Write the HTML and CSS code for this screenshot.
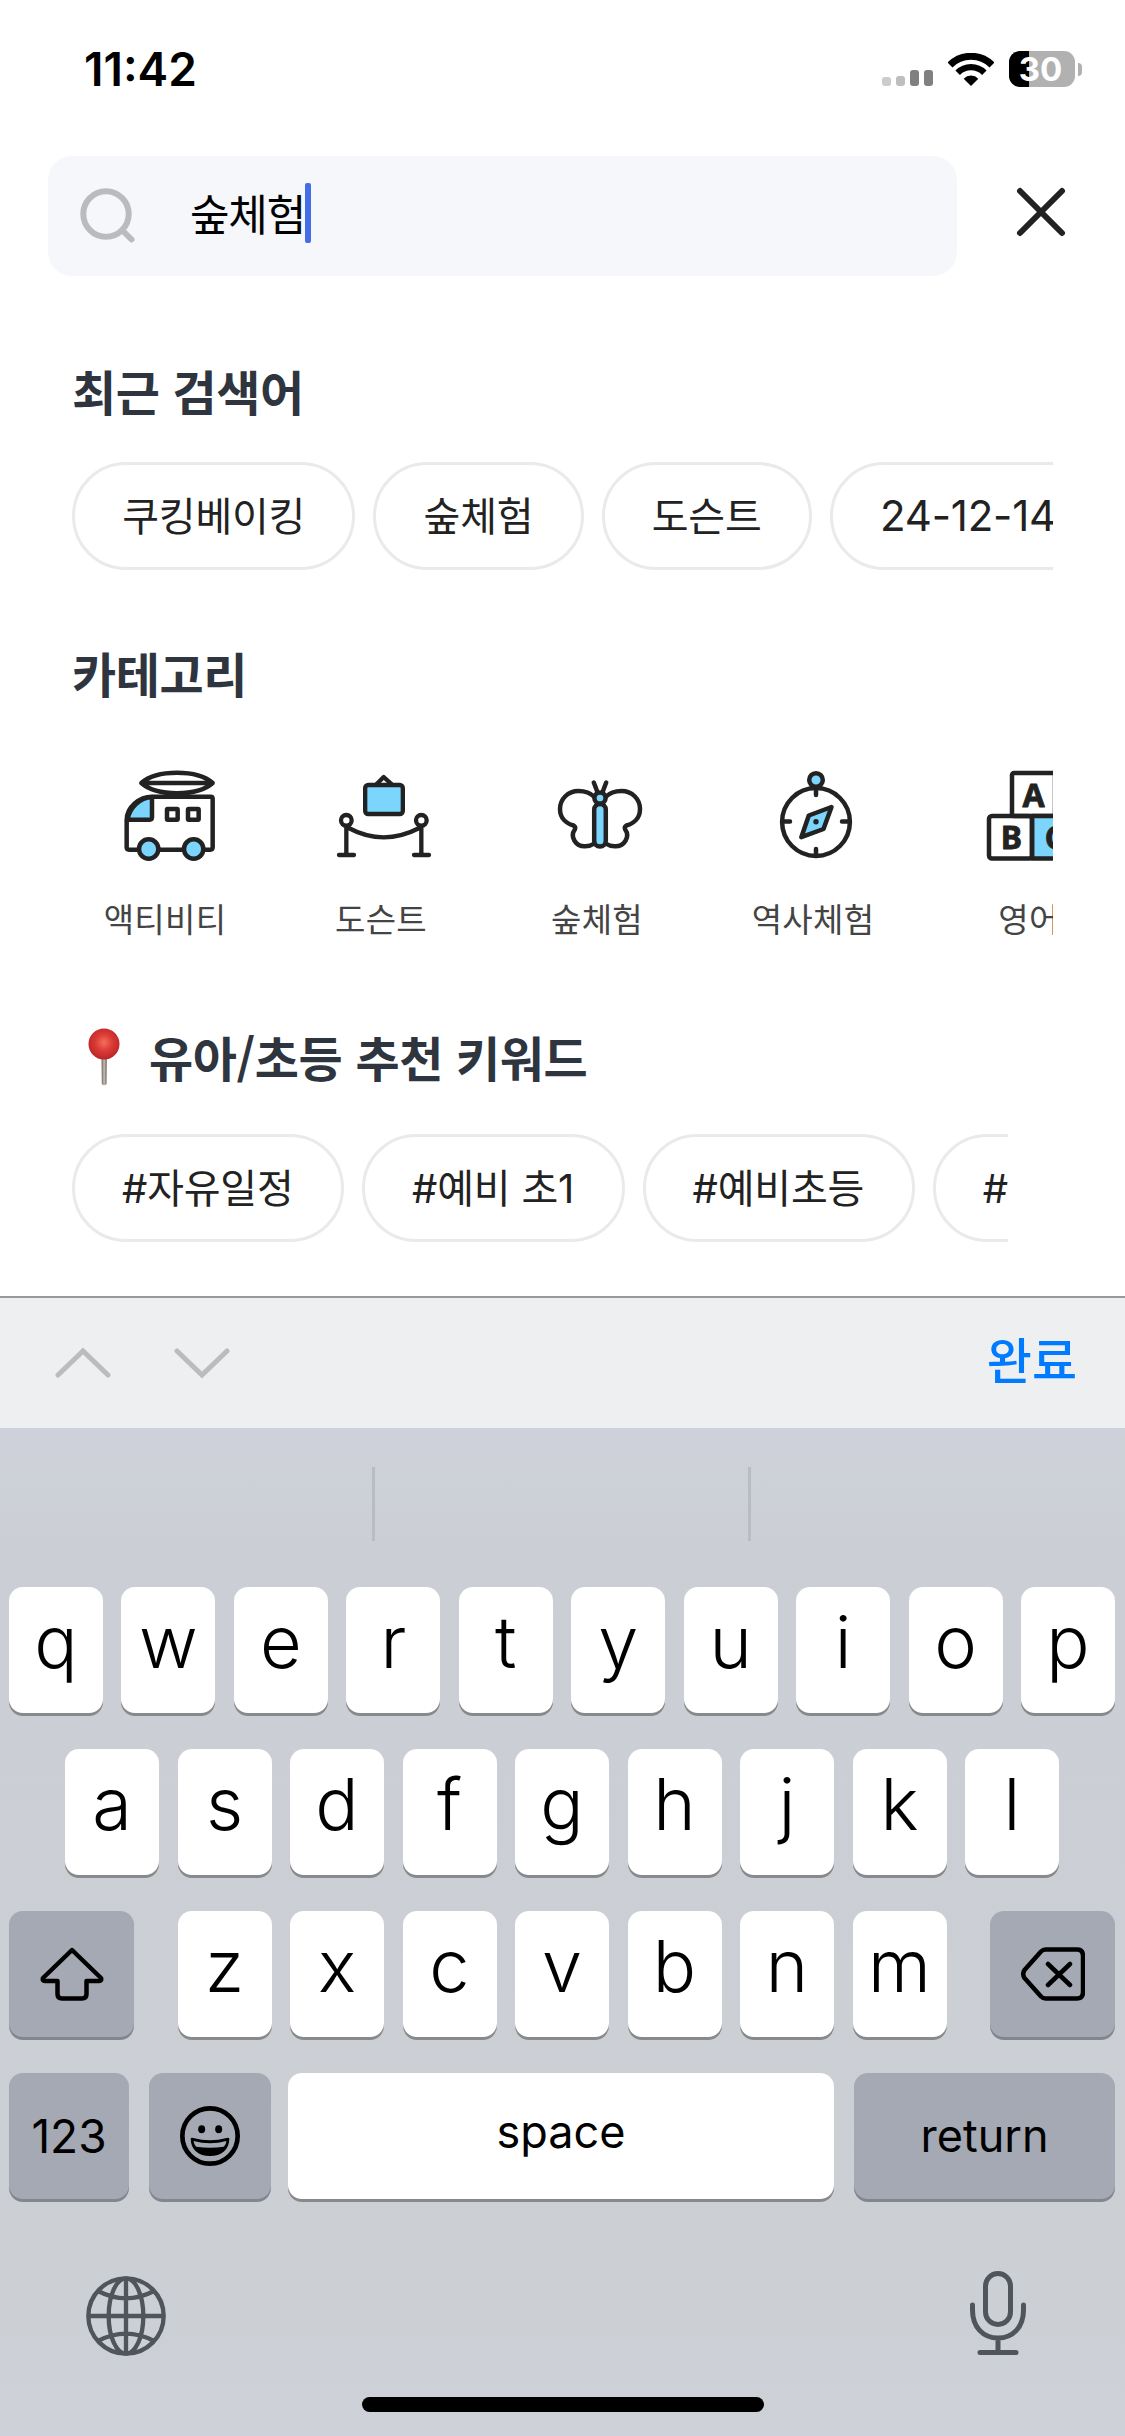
FILE: index.html
```html
<!DOCTYPE html>
<html lang="ko">
<head>
<meta charset="utf-8">
<title>검색</title>
<link rel="stylesheet" href="styles.css">
</head>
<body>
<div class="screen">
  <div class="status">
    <span class="time">11:42</span>
    <div class="indicators">
      <div class="signal"><i class="bar bar-1"></i><i class="bar bar-2"></i><i class="bar bar-3"></i><i class="bar bar-4"></i></div>
      <svg class="wifi" viewBox="264 66 138 99"><g fill="none" stroke="#000"><path stroke-width="21" d="M270 102A89 89 0 0 1 396 102"/><path stroke-width="19" d="M293 125A56 56 0 0 1 373 125"/></g><path d="M333 165L311 143A31 31 0 0 1 355 143Z"/></svg>
      <div class="battery"><span class="level">30</span><i class="nub"></i></div>
    </div>
  </div>

  <header class="search">
    <div class="field">
      <svg class="magnifier" viewBox="0 0 56 56" fill="none" stroke="#b9bbbf" stroke-width="6" stroke-linecap="round"><circle cx="26" cy="26" r="22.7"/><path d="M43 43L51.500 51.500"/></svg>
      <span class="query">숲체험</span><i class="caret"></i>
    </div>
    <svg class="close" viewBox="0 0 54 54" fill="none" stroke="#222" stroke-width="6" stroke-linecap="round"><path d="M6 6L48 48M48 6L6 48"/></svg>
  </header>

  <main class="content">
    <h2 class="title">최근 검색어</h2>
    <div class="chips">
      <span class="chip">쿠킹베이킹</span><span class="chip">숲체험</span><span class="chip">도슨트</span><span class="chip latin">24-12-14</span>
    </div>

    <h2 class="title title-category">카테고리</h2>
    <div class="categories">
      <div class="category">
        <svg class="icon" viewBox="162 66 324 324" fill="none" stroke="#222" stroke-width="13.500" stroke-linejoin="round"><path d="M244 129C290 88 412 88 458 129C412 170 290 170 244 129ZM248 129H454"/><path d="M200 322V240C200 202 236 170 278 170H452Q458 170 458 176V322Q458 329 451 329H207Q200 329 200 322Z"/><path fill="#7bd5fd" d="M203 239C207 205 240 172 276 171V232Q276 239 269 239Z"/><rect x="321" y="207" width="32" height="32" rx="2"/><rect x="384" y="207" width="32" height="32" rx="2"/><circle cx="266" cy="327" r="29" fill="#7bd5fd"/><circle cx="401" cy="327" r="29" fill="#7bd5fd"/></svg>
        <span class="label">액티비티</span>
      </div>
      <div class="category">
        <svg class="icon" viewBox="810 66 324 324" fill="none" stroke="#222" stroke-width="13" stroke-linecap="round" stroke-linejoin="round"><path d="M948 134L971 111L996 134"/><rect x="915.500" y="135" width="113" height="87" rx="9" fill="#7bd5fd"/><circle cx="859" cy="241" r="16"/><circle cx="1084" cy="241" r="16"/><path d="M859 259V344M1084 259V344M837 345H882M1062 345H1107M866 264Q970 320 1078 264"/></svg>
        <span class="label">도슨트</span>
      </div>
      <div class="category">
        <svg class="icon" viewBox="0 0 108 108" fill="none" stroke="#222" stroke-width="4.500" stroke-linecap="round" stroke-linejoin="round"><path d="M48.500 35C44 30.500 38 29 32.500 29C22 29 14 37 14 47C14 56 20 61.500 27.500 63.500Q30 65 28.800 67.500C23.500 75 30 84.300 38.500 84.300Q44 84.500 48.500 81.500M59.500 35C64 30.500 70 29 75.500 29C86 29 94 37 94 47C94 56 88 61.500 80.500 63.500Q78 65 79.200 67.500C84.500 75 78 84.300 69.500 84.300Q64 84.500 59.500 81.500M47.800 20.500L51 29M60.200 20.500L57 29"/><rect x="48.200" y="42" width="11.600" height="42.500" rx="5.800" fill="#7bd5fd"/><circle cx="54" cy="36" r="5.600" fill="#7bd5fd"/></svg>
        <span class="label">숲체험</span>
      </div>
      <div class="category">
        <svg class="icon" viewBox="0 0 108 108" fill="none" stroke="#222" stroke-width="4.500" stroke-linecap="round" stroke-linejoin="round"><circle cx="54" cy="60" r="33.900"/><circle cx="54" cy="18" r="6.800" fill="#7bd5fd"/><path d="M54 27V33M54 87V93M21 59.500H28M80 59.500H87"/><path fill="#7bd5fd" d="M69.500 45L46.800 53.500L39.300 75.200L61.500 67Z"/><circle cx="54" cy="59.800" r="2.700" fill="#222" stroke="none"/></svg>
        <span class="label">역사체험</span>
      </div>
      <div class="category">
        <svg class="icon" viewBox="0 0 108 108" fill="none" stroke="#222" stroke-width="4.500" stroke-linejoin="round"><rect x="34" y="11" width="43" height="43" rx="2"/><path fill="#7bd5fd" d="M54 54H95Q97 54 97 56V94Q97 96.500 95 96.500H54Z"/><rect x="11" y="54" width="43" height="42.500" rx="3"/><g class="block-letter" fill="#222" stroke-width=".8" text-anchor="middle"><text x="55.500" y="44.500">A</text><text x="33.300" y="87.300">B</text><text x="77" y="87.300">C</text></g></svg>
        <span class="label">영어</span>
      </div>
    </div>

    <h2 class="title title-keyword">
      <svg class="pin" viewBox="0 0 32 58"><defs><radialGradient id="pin-head" cx=".5" cy=".45" r=".6"><stop offset="0" stop-color="#f2705c"/><stop offset=".45" stop-color="#dd3a36"/><stop offset="1" stop-color="#b32226"/></radialGradient><linearGradient id="pin-stem"><stop offset="0" stop-color="#6b5f57"/><stop offset=".5" stop-color="#c9c0b8"/><stop offset="1" stop-color="#665a51"/></linearGradient></defs><path fill="url(#pin-stem)" d="M13.500 28H18.800L18.500 56Q16 58.500 13.800 56Z"/><circle cx="16" cy="16" r="15.500" fill="url(#pin-head)"/></svg>
      <span>유아/초등 추천 키워드</span>
    </h2>
    <div class="chips chips-keyword">
      <span class="chip"><b class="num">#</b>자유일정</span><span class="chip"><b class="num">#</b>예비 초<b class="num">1</b></span><span class="chip"><b class="num">#</b>예비초등</span><span class="chip"><b class="num">#</b>초등</span>
    </div>
  </main>

  <div class="toolbar">
    <div class="arrows">
      <svg class="chevron" viewBox="0 0 56 32"><path d="M3 28L28 4L53 28"/></svg>
      <svg class="chevron" viewBox="0 0 56 32"><path d="M3 4L28 28L53 4"/></svg>
    </div>
    <span class="done">완료</span>
  </div>

  <div class="keyboard">
    <div class="suggestions"><i></i><i></i><i></i></div>
    <div class="keys">
      <div class="row"><span class="key">q</span><span class="key">w</span><span class="key">e</span><span class="key">r</span><span class="key">t</span><span class="key">y</span><span class="key">u</span><span class="key">i</span><span class="key">o</span><span class="key">p</span></div>
      <div class="row"><span class="key">a</span><span class="key">s</span><span class="key">d</span><span class="key">f</span><span class="key">g</span><span class="key">h</span><span class="key">j</span><span class="key">k</span><span class="key">l</span></div>
      <div class="row row-spread">
        <span class="key key-dark key-side"><svg class="key-icon" viewBox="0 0 64 54"><path d="M32 3L61 31Q62 34 59 34H46.500V47Q46.500 51.500 42 51.500H22Q17.500 51.500 17.500 47V34H5Q2 34 3 31Z"/></svg></span>
        <div class="row"><span class="key">z</span><span class="key">x</span><span class="key">c</span><span class="key">v</span><span class="key">b</span><span class="key">n</span><span class="key">m</span></div>
        <span class="key key-dark key-side"><svg class="key-icon" viewBox="0 0 64 54"><path d="M24.500 2.500H56Q62 2.500 62 9V45Q62 51.500 56 51.500H24.500Q22 51.500 20 49.500L3.500 31Q1 27 3.500 23L20 4.500Q22 2.500 24.500 2.500ZM27 17L49 38M49 17L27 38"/></svg></span>
      </div>
      <div class="row row-bottom">
        <span class="key key-dark key-num">123</span>
        <span class="key key-dark key-emoji"><svg class="smile" viewBox="358 138 180 180"><circle cx="448" cy="228" r="83" fill="none" stroke="#000" stroke-width="14"/><ellipse cx="423" cy="208" rx="10.500" ry="12"/><ellipse cx="474" cy="208" rx="10.500" ry="12"/><path fill-rule="evenodd" d="M390 236Q391 231 398 234Q448 248 498 234Q505 231 506 236C506 268 482 288 448 288C414 288 390 268 390 236ZM399 243C400 252 403 257 407 260Q448 266 489 260C493 257 496 252 497 243Q448 257 399 243Z"/></svg></span>
        <span class="key key-space">space</span>
        <span class="key key-dark key-return">return</span>
      </div>
    </div>
    <div class="dock">
      <svg class="globe" viewBox="78 648 240 240"><circle cx="198" cy="768" r="113"/><ellipse cx="198" cy="768" rx="52" ry="113"/><path d="M198 655V881M85 768H311M114 693Q198 737 282 693M114 843Q198 799 282 843"/></svg>
      <svg class="mic" viewBox="0 0 56 84"><rect x="15.500" y="2.500" width="25" height="51" rx="12.500"/><path d="M2.500 34V39C2.500 56 13 67 28 67S53.500 56 53.500 39V34M28 67V81M10 81.500H46"/></svg>
    </div>
    <div class="home"></div>
  </div>
</div>
</body>
</html>
```
FILE: styles.css
```css
* { box-sizing: border-box; }
body {
  margin: 0;
  background: #fff;
  font-family: "Noto Sans CJK KR", sans-serif;
  color: #222;
}
svg { display: block; flex: none; }
.screen {
  width: 1125px;
  height: 2436px;
  display: flex;
  flex-direction: column;
  overflow: hidden;
}

/* status bar */
.status {
  height: 138px;
  padding: 0 43px 0 84px;
  display: flex;
  justify-content: space-between;
  align-items: center;
}
.time { font: 600 46px/60px Inter, sans-serif; color: #000; }
.indicators { display: flex; align-items: center; height: 36px; }
.signal { display: flex; align-items: flex-end; gap: 5px; height: 33px; margin-right: 15px; }
.bar { width: 9px; border-radius: 3px; background: #808080; }
.bar-1 { height: 9px; background: #ccc; }
.bar-2 { height: 10px; background: #bebebe; }
.bar-3, .bar-4 { height: 16px; }
.wifi { width: 46px; height: 33px; margin-right: 15px; }
.battery { display: flex; align-items: center; gap: 3px; }
.level {
  width: 66px;
  height: 36px;
  border-radius: 11px;
  background: linear-gradient(90deg, #000 20px, #b1b1b1 20px);
  color: #fff;
  font: 700 33px/36px Inter, sans-serif;
  text-align: center;
  padding-right: 3px;
}
.nub { width: 4px; height: 13px; border-radius: 0 4px 4px 0; background: #b1b1b1; }

/* search header */
.search {
  margin-top: 18px;
  padding: 0 57px 0 48px;
  height: 120px;
  display: flex;
  align-items: center;
  justify-content: space-between;
}
.field {
  width: 909px;
  height: 120px;
  border-radius: 24px;
  background: #f5f7fb;
  display: flex;
  align-items: center;
  padding-left: 32px;
}
.magnifier { width: 56px; height: 56px; margin-right: 54px; }
.query { font-size: 43px; line-height: 60px; letter-spacing: -1.200px; color: #000; margin-bottom: 9px; }
.caret { width: 6px; height: 60px; border-radius: 2px; background: #456de6; margin-bottom: 6px; }
.close { width: 54px; height: 54px; margin-bottom: 8px; }

/* content */
.content { padding: 84px 72px 0; height: 1020px; }
.title {
  margin: 0;
  height: 60px;
  display: flex;
  align-items: center;
  font-size: 48px;
  font-weight: 700;
  line-height: 60px;
  letter-spacing: -.4px;
  color: #2e353e;
}
.chips {
  display: flex;
  gap: 18px;
  margin-top: 42px;
  overflow: hidden;
}
.chip {
  flex: none;
  height: 108px;
  padding: 0 47.200px;
  border: 3px solid #e9eaeb;
  border-radius: 54px;
  font-size: 40px;
  line-height: 98px;
  letter-spacing: -.200px;
  white-space: nowrap;
}
.latin { font-family: Inter, sans-serif; font-size: 42px; line-height: 102px; }
.num { font-family: Inter, sans-serif; font-size: 40px; font-weight: 400; line-height: 1; }
.title-category { margin-top: 72px; }
.categories {
  display: flex;
  gap: 24px;
  margin-top: 60px;
  overflow: hidden;
}
.category {
  flex: none;
  width: 192px;
  display: flex;
  flex-direction: column;
  align-items: center;
}
.icon { width: 108px; height: 108px; }
.block-letter { font: 700 32px "Noto Sans", sans-serif; }
.label {
  margin: 24px 6px 0 0;
  font-size: 33px;
  line-height: 48px;
  letter-spacing: .3px;
  color: #444;
}
.title-keyword { margin-top: 85px; padding-left: 16px; gap: 29px; }
.title-keyword span { margin-bottom: 3px; }
.pin { width: 32px; height: 58px; }
.chips-keyword { margin: 47px 45px 0 0; }
.chips-keyword .chip { padding: 0 47.500px 0 47px; }

/* input accessory bar */
.toolbar {
  height: 132px;
  border-top: 2px solid #98999b;
  background: #edeff1;
  display: flex;
  align-items: center;
  justify-content: space-between;
  padding: 0 48px 0 55px;
}
.arrows { display: flex; gap: 63px; }
.chevron { width: 56px; height: 32px; fill: none; stroke: #bcbcbd; stroke-width: 5; stroke-linecap: round; }
.done { font-size: 49px; font-weight: 500; line-height: 60px; color: #007aff; margin-bottom: 10px; }

/* keyboard */
.keyboard {
  flex: 1;
  background: linear-gradient(#ced1d9, #cbcfd5 120px, #cccfd4 900px, #ced1d9);
  font-family: Inter, sans-serif;
  color: #000;
  display: flex;
  flex-direction: column;
}
.suggestions { display: flex; height: 74px; margin: 39px 2px 46px 0; }
.suggestions i { flex: 1; border-right: 3px solid #b9bcc2; }
.suggestions i:last-child { border: 0; }
.keys { display: flex; flex-direction: column; gap: 36px; padding: 0 10px 0 9px; }
.row { display: flex; justify-content: center; gap: 18.500px; }
.row-spread { justify-content: space-between; }
.key {
  width: 94px;
  height: 126px;
  border-radius: 14px;
  background: #fff;
  box-shadow: 0 3px 0 #88898d;
  font-size: 72px;
  font-weight: 300;
  line-height: 110px;
  text-align: center;
}
.key-dark { background: #a4a9b4; box-shadow: 0 3px 0 #83868d; display: flex; align-items: center; justify-content: center; }
.key-side { width: 125px; }
.key-icon { width: 64px; height: 54px; fill: none; stroke: #000; stroke-width: 4.500; stroke-linecap: round; stroke-linejoin: round; }
.row-bottom { gap: 0; justify-content: flex-start; }
.row-bottom .key { flex: none; font-size: 45px; font-weight: 400; line-height: 118px; }
.row-bottom .key-num { width: 120px; font-size: 46px; line-height: 126px; margin-right: 20px; }
.row-bottom .key-emoji { width: 122px; margin-right: 17px; }
.row-bottom .key-space { width: 546px; margin-right: 20px; }
.row-bottom .key-return { width: 261px; line-height: 126px; }
.smile { width: 60px; height: 60px; }
.dock {
  display: flex;
  justify-content: space-between;
  align-items: center;
  height: 84px;
  margin: 72px 99px 0 86px;
  fill: none;
  stroke: #50555c;
}
.globe { width: 80px; height: 80px; margin-top: 6px; stroke-width: 13; }
.mic { width: 56px; height: 84px; stroke-width: 5; stroke-linecap: round; }
.home { width: 402px; height: 15px; border-radius: 8px; background: #000; margin: 42px auto 0; }
```
